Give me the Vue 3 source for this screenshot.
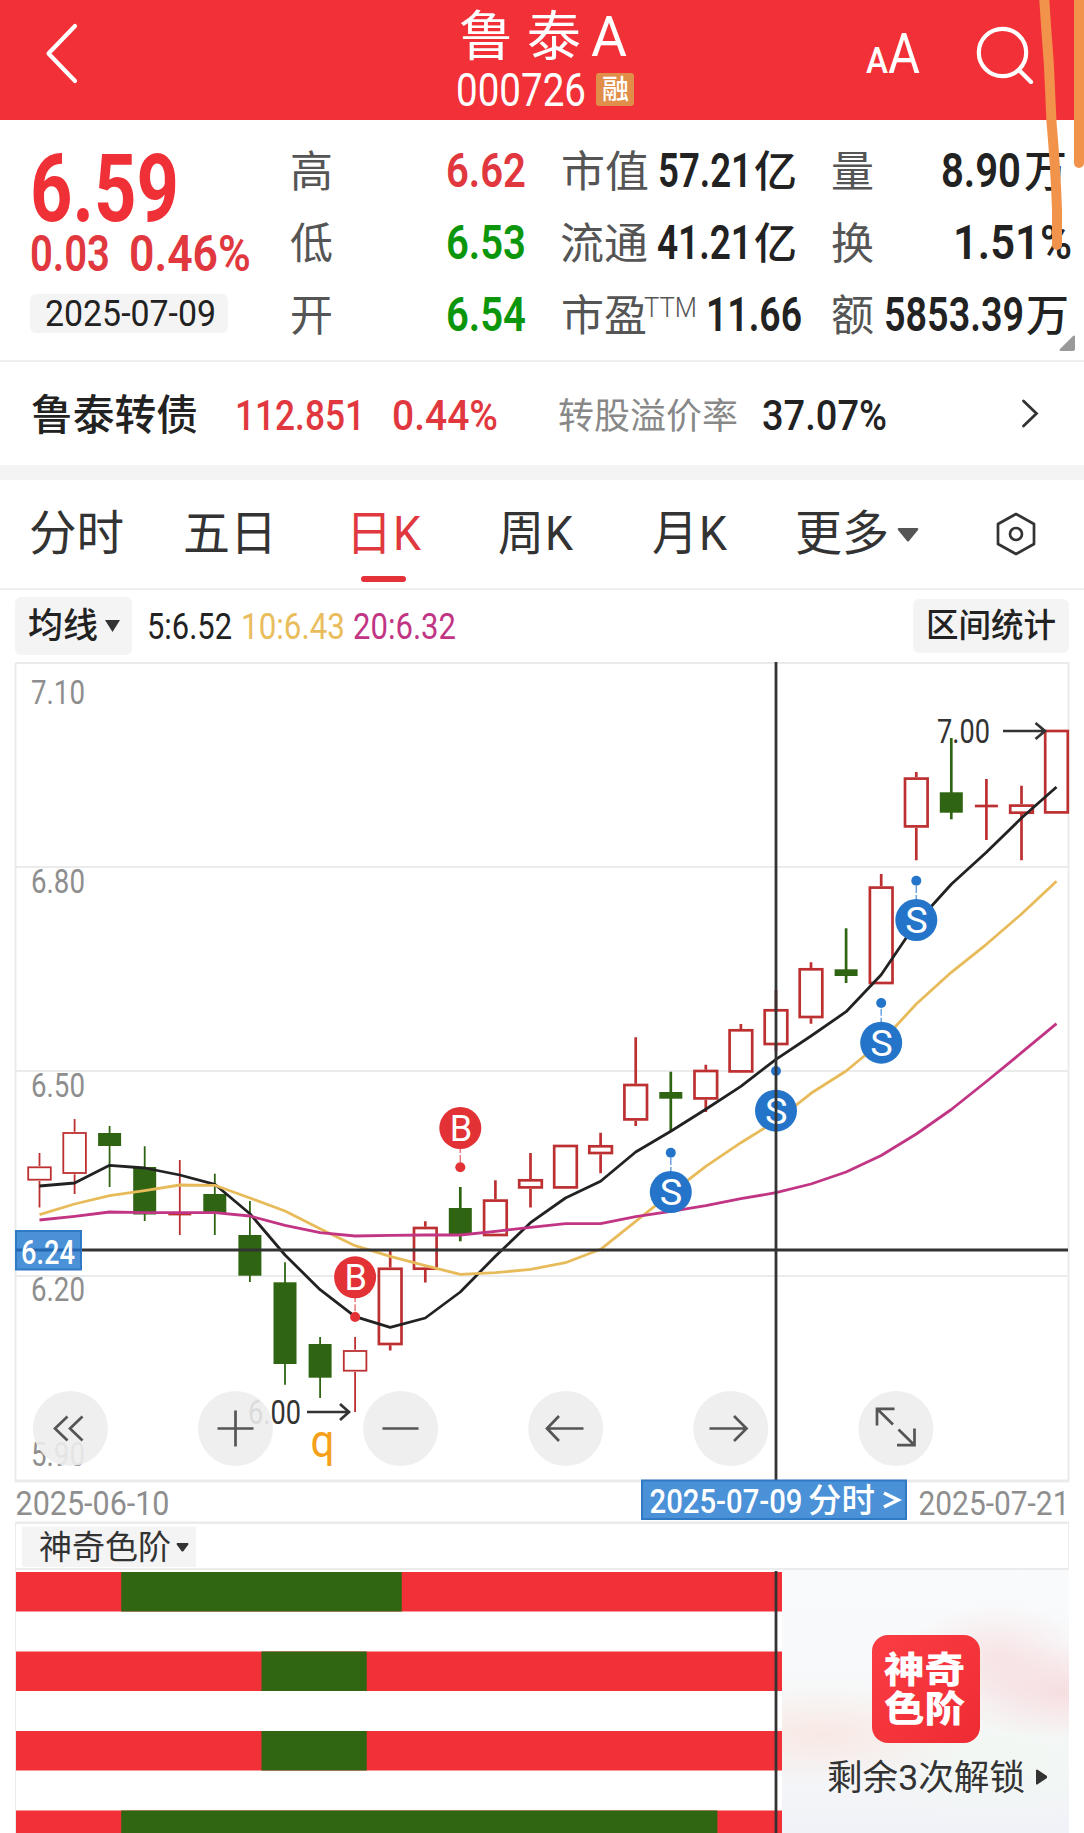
<template>
  <div class="page">
    <header class="nav">
      <svg class="back" viewBox="0 0 36 64" width="36" height="64">
        <path d="M31 4 L4.500 31.500 L31 59" />
      </svg>
      <div class="title">
        <div class="row name">
          <FitText t="鲁 泰" :w="122" :s="54" />
          <FitText t="A" :w="36" :s="55" :gap="10" />
        </div>
        <div class="row code">
          <FitText t="000726" :w="130" :s="47" weight="400" />
          <span class="badge"><FitText t="融" :w="27" :s="27" weight="500" /></span>
        </div>
      </div>
      <div class="row font-size">
        <FitText t="A" :w="22" :s="36" weight="500" />
        <FitText t="A" :w="32" :s="55" />
      </div>
      <svg class="search" viewBox="0 0 60 60" width="60" height="60">
        <circle cx="28.5" cy="28.5" r="23.7" />
        <path d="M45 46 L57 58" />
      </svg>
    </header>

    <section class="quote">
      <div class="price">
        <FitText class="red" t="6.59" :w="149" :s="94" weight="700" />
        <div class="row change">
          <FitText class="red2" t="0.03" :w="80" :s="50" weight="600" />
          <FitText class="red2" t="0.46%" :w="122" :s="50" weight="600" :gap="19" />
        </div>
        <div class="date"><FitText t="2025-07-09" :w="171" :s="36.500" /></div>
      </div>
      <div class="stats">
        <div v-for="(line, i) in stats" :key="i" class="row">
          <FitText v-for="(c, j) in line" :key="j" :class="c.k" :t="c.t" :w="c.w" :s="c.s" :weight="c.b" :gap="c.gap" :lift="c.lift" />
        </div>
      </div>
      <svg class="corner" viewBox="0 0 16 16" width="16" height="16"><path d="M16 1 V14 Q16 16 14 16 H1 Q0 15 1 14 L14 1 Q15 0 16 1Z" /></svg>
    </section>

    <section class="bond">
      <div class="row">
        <FitText t="鲁泰转债" :w="167" :s="42" weight="500" />
        <FitText class="red2" t="112.851" :w="130" :s="43" weight="500" :gap="37" />
        <FitText class="red2" t="0.44%" :w="106" :s="43" weight="500" :gap="27" />
        <FitText class="muted" t="转股溢价率" :w="180" :s="36" :gap="60" :lift="1" />
        <FitText t="37.07%" :w="125" :s="43" weight="500" :gap="24" />
      </div>
      <svg class="more" viewBox="0 0 18 30" width="18" height="30"><path d="M2.500 2 L15.500 14.500 L2.500 27" /></svg>
    </section>

    <nav class="tabs">
      <div v-for="tab in tabs" :key="tab.t" class="tab" :class="{ active: tab.active }">
        <div class="row">
          <FitText :t="tab.t" :w="tab.w" :s="47.500" weight="400" />
          <FitText v-if="tab.k" t="K" :w="28" :s="48" :gap="1" />
        </div>
        <i v-if="tab.active"></i>
      </div>
      <svg class="tri" viewBox="0 0 22 14" width="22" height="14"><path d="M2 0 H20 Q22 0 21 2 L12 13 Q11 14 10 13 L1 2 Q0 0 2 0Z" /></svg>
      <svg class="gear" viewBox="0 0 40 44" width="40" height="44">
        <path d="M20 2 L38 12 V32 L20 42 L2 32 V12Z" />
        <circle cx="20" cy="22" r="6" />
      </svg>
    </nav>

    <section class="ma">
      <div class="pill">
        <FitText t="均线" :w="70" :s="35" weight="500" />
        <svg viewBox="0 0 15 12" width="15" height="12"><path d="M0 0 H15 L7.500 12Z" /></svg>
      </div>
      <div class="row">
        <FitText t="5:6.52" :w="85" :s="36" />
        <FitText class="yellow" t="10:6.43" :w="104" :s="36" :gap="9" />
        <FitText class="purple" t="20:6.32" :w="103" :s="36" :gap="8" />
      </div>
      <div class="pill range"><FitText t="区间统计" :w="130" :s="32.500" weight="500" /></div>
    </section>

    <svg class="chart" viewBox="0 660 1084 864" width="1084" height="864">
      <g class="grid">
        <path d="M15.500 663 H1068.500 V1481 M15.500 663 V1481" />
        <path d="M15 867 H1068 M15 1071 H1068 M15 1276 H1068" />
        <path d="M15 1481 H1069 M15 1523 H1069" />
      </g>
      <g class="axis">
        <text v-for="a in axis" :key="a.t" x="31" :y="a.y" textLength="54" lengthAdjust="spacingAndGlyphs">{{ a.t }}</text>
      </g>

      <g v-for="(c, i) in candles" :key="'c' + i" :class="c[0] ? 'up' : 'down'" :stroke-width="i < 10 ? 1.8 : 2.7">
        <template v-if="c[0]">
          <path :d="`M${cx(i)} ${c[1]} V${c[2]} M${cx(i)} ${c[3]} V${c[4]}`" />
          <path v-if="c[2] === c[3]" :d="`M${cx(i) - 11.5} ${c[2]} H${cx(i) + 11.5}`" />
          <rect v-else :x="cx(i) - 11.3" :y="c[2] + 1.3" width="22.600" :height="c[3] - c[2] - 2.6" />
        </template>
        <template v-else>
          <path :d="`M${cx(i)} ${c[1]} V${c[4]}`" />
          <rect :x="cx(i) - 11.5" :y="c[2]" width="23" :height="c[3] - c[2]" />
        </template>
      </g>

      <polyline v-for="l in lines" :key="l.color" class="line" :stroke="l.color" :points="points(l.ys)" />

      <g class="extreme">
        <text x="937" y="743" textLength="53" lengthAdjust="spacingAndGlyphs">7.00</text>
        <path d="M1003 731 H1044 M1035.500 723 L1045 731 L1035.500 739" />
        <text x="248" y="1424" textLength="53" lengthAdjust="spacingAndGlyphs">6.00</text>
        <path d="M307 1412 H348 M340 1404 L349 1412 L340 1420" />
      </g>
      <text class="q" x="310.500" y="1457" textLength="24" lengthAdjust="spacingAndGlyphs">q</text>

      <g v-for="m in marks" :key="'m' + m.i" :class="m.t === 'B' ? 'buy' : 'sell'">
        <path :d="`M${cx(m.i)} ${m.y} V${m.dot}`" stroke-dasharray="7 2" />
        <circle :cx="cx(m.i)" :cy="m.dot" r="5" />
        <circle :cx="cx(m.i)" :cy="m.y" r="21" />
        <text :x="cx(m.i) - (m.t === 'B' ? 10.5 : 11)" :y="m.y + 13" textLength="22.500" lengthAdjust="spacingAndGlyphs">{{ m.t }}</text>
      </g>

      <path class="cross" d="M776 662 V1480 M15 1250 H1068" />
      <g class="tag">
        <rect x="16" y="1231" width="65" height="38.500" />
        <path d="M16 1250 H81" />
        <text x="21" y="1263.500" font-size="33" textLength="54" lengthAdjust="spacingAndGlyphs">6.24</text>
      </g>

      <g class="tools">
        <circle v-for="n in 6" :key="n" :cx="70.4 + (n - 1) * 165.1" cy="1428.500" r="37.500" />
        <path d="M67.500 1416.500 L55 1428.500 L67.500 1440.500 M82.500 1416.500 L70 1428.500 L82.500 1440.500" />
        <path d="M217.500 1428.500 H253.500 M235.500 1410.500 V1446.500 M382.500 1428.500 H418.500" />
        <path d="M583.500 1428.500 H547 M559 1416 L547 1428.500 L559 1441" />
        <path d="M709.500 1428.500 H746 M734 1416 L746.500 1428.500 L734 1441" />
        <path d="M894.500 1408.800 H877 V1425.500 M877 1408.800 L893 1424.500 M897 1445.200 H914.500 V1428.500 M914.500 1445.200 L898.500 1429.500" />
      </g>

      <g class="axis dates">
        <text x="15.500" y="1515" textLength="154" lengthAdjust="spacingAndGlyphs">2025-06-10</text>
        <text x="918.500" y="1515" textLength="151" lengthAdjust="spacingAndGlyphs">2025-07-21</text>
      </g>
      <g class="tag">
        <rect x="642" y="1480.500" width="264" height="38.500" />
        <text x="649.500" y="1512.500" font-size="34" textLength="153" lengthAdjust="spacingAndGlyphs">2025-07-09</text>
        <text x="808" y="1512" font-size="33.500" textLength="67" lengthAdjust="spacingAndGlyphs">分时</text>
        <path class="gt" d="M884 1493 L898 1500 L884 1507" />
      </g>
    </svg>

    <section class="levels">
      <div class="levels-head">
        <div class="levels-name">
          <FitText t="神奇色阶" :w="132" :s="33" weight="400" />
          <svg viewBox="0 0 13 9" width="13" height="9"><path d="M1 0 H12 Q13 1 12 2 L7.500 8 Q6.500 9 5.500 8 L1 2 Q0 1 1 0Z" /></svg>
        </div>
      </div>
      <div class="levels-body">
        <svg class="bars" viewBox="0 1570 782 263" width="782" height="263">
          <path class="edge" d="M15.500 1570 V1833" />
          <g v-for="(b, r) in bars" :key="r">
            <rect class="hot" x="16" :y="1572 + r * 79.5" width="766" height="39.500" />
            <rect class="cold" :x="16 + b[0] * 35.07" :y="1572 + r * 79.5" :width="(b[1] - b[0]) * 35.07" height="39.500" />
          </g>
          <path class="cross" d="M776 1571 V1833" />
        </svg>
        <div class="unlock">
          <div class="logo">
            <FitText t="神奇" :w="81" :s="36" weight="900" />
            <FitText t="色阶" :w="81" :s="36" weight="900" />
          </div>
          <div class="unlock-text">
            <FitText t="剩余3次解锁" :w="198" :s="35.500" />
            <svg viewBox="0 0 11 16" width="11" height="16"><path d="M0 1 Q1 0 2 1 L11 7 Q11.500 8 11 9 L2 15 Q1 16 0 15Z" /></svg>
          </div>
        </div>
      </div>
    </section>

    <svg class="strokes" viewBox="0 0 50 270" width="50" height="270">
      <path d="M10 -6 C12 30 14 50 15 67 C16 90 17 110 17.500 122 C20 150 22 180 23 210 V245" />
      <path d="M45 -6 V163" />
    </svg>
  </div>
</template>

<script setup>
import { h } from 'vue'

// Text squeezed to a fixed width; its box ends on the baseline
const FitText = (p) =>
  h('svg', {
    class: 'fit',
    width: p.w,
    height: p.s * 0.72,
    style: { marginLeft: (p.gap || 0) + 'px', marginBottom: (p.lift || 0) + 'px', overflow: 'visible', flex: 'none', display: 'block' }
  }, [
    h('text', {
      x: 0,
      y: p.s * 0.72,
      fill: 'currentColor',
      'font-size': p.s,
      'font-weight': p.weight || 400,
      textLength: p.w,
      lengthAdjust: 'spacingAndGlyphs'
    }, p.t)
  ])
FitText.props = ['t', 'w', 's', 'weight', 'gap', 'lift']

const label = (t, w, gap) => ({ t, w, s: 43, gap, k: 'label' })
const num = (t, w, gap, k = '') => ({ t, w, s: 49, b: 600, gap, k })
const unit = (t, gap) => ({ t, w: 43, s: 43, b: 500, gap })

const stats = [
  [label('高', 43, 0), num('6.62', 80, 113, 'red2'), label('市值', 88, 35), num('57.21', 94, 9), unit('亿', 2), label('量', 43, 34), num('8.90', 80, 67), unit('万', 3)],
  [label('低', 43, 0), num('6.53', 80, 113, 'green'), label('流通', 88, 34), num('41.21', 95, 9), unit('亿', 2), label('换', 43, 34), num('1.51%', 119, 79)],
  [label('开', 43, 0), num('6.54', 80, 113, 'green'), label('市盈', 86, 35), { t: 'TTM', w: 53, s: 27, b: 300, gap: -3, lift: 14, k: 'label' }, num('11.66', 96, 9), label('额', 43, 29), num('5853.39', 140, 10), unit('万', 2)]
]

const tabs = [
  { t: '分时', w: 95 },
  { t: '五日', w: 94 },
  { t: '日', w: 46, k: true, active: true },
  { t: '周', w: 46, k: true },
  { t: '月', w: 46, k: true },
  { t: '更多', w: 94 }
]

const axis = [
  { t: '7.10', y: 704 },
  { t: '6.80', y: 893 },
  { t: '6.50', y: 1097 },
  { t: '6.20', y: 1301 },
  { t: '5.90', y: 1465.5 }
]

const cx = (i) => +(39.5 + i * 35.07).toFixed(1)

// [up, high, body top, body bottom, low]
const candles = [
  [1, 1153, 1166, 1181, 1207.5],
  [1, 1119, 1131.7, 1174.3, 1194],
  [0, 1126, 1133, 1146, 1187],
  [0, 1146.3, 1167, 1214.5, 1221],
  [1, 1160, 1214.5, 1214.5, 1235],
  [0, 1173.7, 1194, 1213.5, 1235],
  [0, 1201, 1235, 1275.7, 1282],
  [0, 1262.3, 1282.3, 1364, 1384.7],
  [0, 1337, 1344, 1377.7, 1398],
  [1, 1337, 1349.7, 1372, 1412],
  [1, 1249, 1267.5, 1345.3, 1350.5],
  [1, 1221.3, 1226.7, 1270, 1282.5],
  [0, 1187, 1208, 1234.3, 1241.3],
  [1, 1180.3, 1199.3, 1236.3, 1236.3],
  [1, 1153, 1179, 1188.7, 1207.5],
  [1, 1144.7, 1144.7, 1188.7, 1188.7],
  [1, 1132.7, 1145, 1154.3, 1173.3],
  [1, 1037.3, 1083.7, 1120.7, 1126],
  [0, 1071.7, 1092, 1098.7, 1131],
  [1, 1064.7, 1069.7, 1099.7, 1112],
  [1, 1024, 1029, 1072.7, 1072.7],
  [1, 990, 1009, 1045.3, 1051],
  [1, 962.3, 968, 1018.3, 1023.7],
  [0, 928.3, 969.3, 976, 983],
  [1, 874, 886.3, 984.3, 984.3],
  [1, 772, 777.3, 827.7, 860.3],
  [0, 738, 792.3, 812.7, 819.3],
  [1, 779, 806, 806, 840],
  [1, 785.7, 804.3, 814, 860.3],
  [1, 729.7, 729.7, 813.7, 813.7]
]

const lines = [
  { color: '#222222', ys: [1186, 1183, 1165.3, 1168, 1175, 1184.3, 1213.7, 1255, 1289.7, 1316.7, 1327.3, 1318, 1292, 1256.3, 1222.7, 1198, 1181.3, 1152, 1131.3, 1109.3, 1086.3, 1059.3, 1036, 1011.7, 974.7, 923, 884.3, 852.3, 818, 787] },
  { color: '#e8bb5a', ys: [1214.7, 1204, 1195.7, 1190.7, 1185, 1185.3, 1198, 1211, 1228.7, 1245.7, 1256.3, 1265.7, 1274.3, 1272.7, 1269.3, 1262.7, 1249.3, 1221.3, 1193.3, 1166.3, 1142.7, 1121, 1093.3, 1071, 1042, 1004, 972.3, 944.3, 914, 881.3] },
  { color: '#c13584', ys: [1220, 1216.3, 1212, 1212.7, 1212.7, 1212.7, 1216, 1225.3, 1232.7, 1236, 1235.3, 1235, 1235, 1231.3, 1227.3, 1223.7, 1223.7, 1216.7, 1211.3, 1205.7, 1198.7, 1192.7, 1184, 1172, 1155.5, 1134, 1109.5, 1081.5, 1052.7, 1023.7] }
]

const points = (ys) => ys.map((y, i) => `${cx(i)},${y}`).join(' ')

const marks = [
  { t: 'B', i: 9, y: 1277.3, dot: 1317 },
  { t: 'B', i: 12, y: 1128, dot: 1167.3 },
  { t: 'S', i: 18, y: 1192, dot: 1152.7 },
  { t: 'S', i: 21, y: 1110.7, dot: 1071 },
  { t: 'S', i: 24, y: 1042.7, dot: 1003 },
  { t: 'S', i: 25, y: 920, dot: 880.7 }
]

const bars = [[3, 11], [7, 10], [7, 10], [3, 20]]
</script>

<style>
body {
  margin: 0;
  background: #fff;
}
</style>

<style scoped>
.page {
  position: relative;
  width: 1084px;
  height: 1833px;
  overflow: hidden;
  background: #fff;
  color: #222;
  font-family: Roboto, "Noto Sans CJK SC", sans-serif;
}
svg {
  display: block;
  flex: none;
}
.row {
  display: flex;
  align-items: flex-end;
}
.red { color: #f03037; }
.red2 { color: #e0383e; }
.green { color: #0c960c; }
.label { color: #555; }
.muted { color: #888; }
.yellow { color: #e9bd5c; }
.purple { color: #c13584; }

.nav {
  display: flex;
  align-items: flex-start;
  height: 120px;
  background: #f23037;
  color: #fff;
}
.back {
  margin: 22px 0 0 44px;
}
.back path, .search path, .search circle {
  fill: none;
  stroke: #fff;
  stroke-width: 4.2;
  stroke-linecap: round;
  stroke-linejoin: round;
}
.title {
  width: 180px;
  margin-left: 376px;
}
.name {
  height: 56px;
  padding-left: 3px;
}
.code {
  height: 50px;
}
.badge {
  display: flex;
  align-items: center;
  justify-content: center;
  width: 38px;
  height: 33px;
  margin-left: 10px;
  border-radius: 3px;
  background: #e08e4a;
}
.font-size {
  width: 55px;
  height: 73px;
  margin-left: 230px;
}
.search {
  margin: 24px 0 0 53px;
}

.quote {
  position: relative;
  display: flex;
  height: 240px;
  border-bottom: 2px solid #eee;
}
.price {
  width: 290px;
  padding: 33px 0 0 30px;
  box-sizing: border-box;
}
.change {
  height: 50px;
}
.date {
  display: flex;
  justify-content: center;
  align-items: center;
  width: 198px;
  height: 39px;
  margin-top: 23px;
  padding-left: 3px;
  box-sizing: border-box;
  border-radius: 6px;
  background: #f4f4f4;
}
.stats .row {
  height: 72px;
}
.stats .row:first-child {
  height: 67px;
}
.corner {
  position: absolute;
  left: 1059px;
  top: 215px;
  fill: #999;
}

.bond {
  display: flex;
  height: 103px;
  border-bottom: 15px solid #f4f4f4;
}
.bond .row {
  width: 1021px;
  height: 68px;
  padding-left: 31px;
  box-sizing: border-box;
}
.more {
  margin-top: 37px;
}
.more path {
  fill: none;
  stroke: #333;
  stroke-width: 2.8;
  stroke-linecap: round;
}

.tabs {
  display: flex;
  height: 108px;
  padding-left: 29px;
  border-bottom: 2px solid #eee;
  color: #333;
}
.tab {
  display: flex;
  flex-direction: column;
  align-items: center;
  margin-right: 59px;
}
.tab .row {
  height: 70px;
}
.tab:nth-child(2) {
  margin-right: 69px;
}
.tab:nth-child(3) {
  margin-right: 77px;
}
.tab:nth-child(4) {
  margin-right: 79px;
}
.tab:nth-child(5) {
  margin-right: 68px;
}
.tab:nth-child(6) {
  margin-right: 8px;
}
.tab.active {
  color: #e0383e;
}
.tab i {
  width: 45px;
  height: 6px;
  margin-top: 26px;
  border-radius: 3px;
  background: #e53238;
}
.tri {
  margin-top: 48px;
  fill: #555;
}
.gear {
  margin: 32px 0 0 77px;
  fill: none;
  stroke: #333;
  stroke-width: 2.7;
  stroke-linejoin: round;
}

.ma {
  display: flex;
  align-items: flex-start;
  height: 70px;
  padding: 0 15px;
}
.pill {
  display: flex;
  align-items: center;
  gap: 7px;
  width: 117px;
  height: 58px;
  margin-top: 7px;
  padding-left: 13px;
  box-sizing: border-box;
  border-radius: 6px;
  background: #f4f4f4;
}
.pill svg {
  fill: #333;
}
.ma .row {
  height: 49px;
  margin-left: 15px;
}
.range {
  width: 156px;
  height: 54px;
  margin-top: 9px;
  margin-left: auto;
}

.chart {
  fill: none;
}
.grid {
  stroke: #ebebeb;
  stroke-width: 2;
}
.grid path:last-child {
  stroke-width: 3;
}
.axis {
  fill: #8e8e8e;
  font-size: 33.5px;
}
.dates {
  font-size: 33px;
}
.up {
  stroke: #bd3031;
}
.down {
  stroke: #2f6412;
}
.down rect {
  fill: #2f6412;
  stroke: none;
}
.line {
  stroke-width: 2.8;
  stroke-linejoin: round;
}
.extreme {
  stroke: #333;
  stroke-width: 2.7;
}
.extreme text {
  fill: #333;
  stroke: none;
  font-size: 33px;
}
.q {
  fill: #f5a01b;
  font-size: 46px;
  font-weight: 400;
}
.buy {
  fill: #e23235;
}
.sell {
  fill: #2475ca;
}
.buy path {
  stroke: #e8787a;
  stroke-width: 1.5;
}
.sell path {
  stroke: #6aa3de;
  stroke-width: 1.5;
}
.buy text, .sell text {
  fill: #fff;
  font-size: 36px;
}
.cross {
  fill: none;
  stroke: #333;
  stroke-width: 2.8;
}
.tag rect {
  fill: #4b91d7;
  stroke: #3079c5;
  stroke-width: 2;
}
.tag path {
  stroke: #2567ae;
  stroke-width: 2.8;
}
.tag text {
  fill: #fff;
  font-weight: 500;
}
.tag .gt {
  stroke: #fff;
  stroke-width: 3.6;
}
.tools circle {
  fill: #ededed;
  fill-opacity: 0.9;
}
.tools path {
  stroke: #555;
  stroke-width: 2.7;
}

.levels-head {
  height: 46px;
  margin: 0 15px;
  padding: 3px 0 0 6px;
  box-sizing: border-box;
  border: solid #ececec;
  border-width: 0 1px 2px;
}
.levels-name {
  display: flex;
  align-items: center;
  gap: 5px;
  width: 174px;
  height: 40px;
  padding-left: 17px;
  box-sizing: border-box;
  background: #f4f4f4;
  color: #333;
}
.levels-body {
  display: flex;
}
.edge {
  stroke: #ebebeb;
}
.hot {
  fill: #f23037;
}
.cold {
  fill: #306612;
}
.unlock {
  display: flex;
  flex-direction: column;
  align-items: center;
  width: 287px;
  height: 265px;
  background:
    radial-gradient(ellipse 120px 48px at 98% 46%, rgba(247, 204, 208, 0.6), rgba(247, 204, 208, 0)),
    radial-gradient(ellipse 90px 50px at 75% 32%, rgba(247, 214, 216, 0.6), rgba(247, 214, 216, 0)),
    radial-gradient(ellipse 150px 50px at 14% 62%, rgba(250, 222, 214, 0.6), rgba(250, 222, 214, 0)),
    radial-gradient(ellipse 150px 60px at 75% 74%, rgba(240, 247, 240, 0.8), rgba(240, 247, 240, 0)),
    linear-gradient(#f9fafc, #f6f8f8 60%, #f1f2f8);
}
.logo {
  display: flex;
  flex-direction: column;
  align-items: center;
  width: 108px;
  height: 108px;
  margin-top: 65px;
  padding: 22px 2px 0 0;
  gap: 13px;
  box-sizing: border-box;
  border-radius: 16px;
  background: linear-gradient(135deg, #fb3d44, #ee2b33);
  color: #fff;
}
.unlock-text {
  display: flex;
  align-items: center;
  gap: 11px;
  margin-top: 21px;
  margin-left: 22px;
  color: #333;
}
.levels-name path, .unlock-text path {
  fill: currentColor;
}
.strokes {
  position: absolute;
  left: 1034px;
  top: 0;
  fill: none;
  stroke: #f1934b;
  stroke-width: 10;
  stroke-linecap: round;
}
</style>
